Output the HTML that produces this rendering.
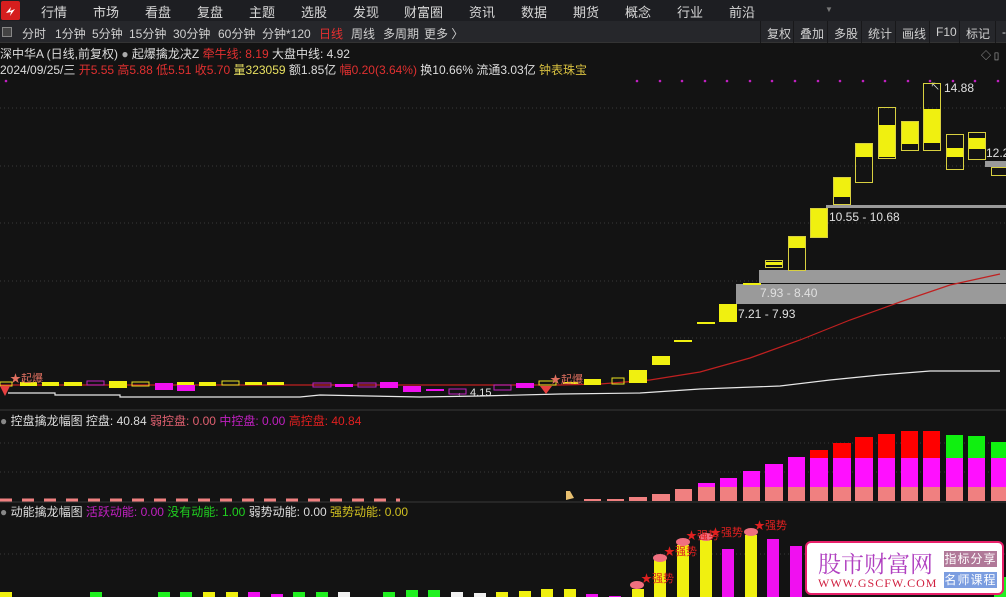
<!DOCTYPE html>
<html><head><meta charset="utf-8"><style>
*{margin:0;padding:0;box-sizing:border-box}
body{width:1006px;height:597px;background:#131313;overflow:hidden;font-family:"Liberation Sans","Noto Sans CJK SC",sans-serif;position:relative;color:#ddd}
.nav{position:absolute;left:0;top:0;width:1006px;height:21px;background:#1d1e22}
.nav span{position:absolute;top:2px;font-size:13px;color:#d8d8d8}
.tb{position:absolute;left:0;top:21px;width:1006px;height:22px;background:#26272b;border-bottom:1px solid #333}
.tb span{position:absolute;top:4px;font-size:12px;color:#d0d0d0}
.rb{position:absolute;top:21px;height:22px;font-size:12px;color:#d0d0d0;padding:4px 0 0 6px;border-left:1px solid #18181a}
.t{position:absolute;font-size:12px;white-space:nowrap}
</style></head><body>
<div class="nav">
<div style="position:absolute;left:1px;top:1px;width:19px;height:19px;background:#d51e1e;border-radius:2px"><svg width="19" height="19"><path d="M5 12 L10 6 L9 10 L14 8 L9 15 L10 11 Z" fill="#fff"/></svg></div>
<span style="left:41px">行情</span><span style="left:93px">市场</span><span style="left:145px">看盘</span><span style="left:197px">复盘</span><span style="left:249px">主题</span><span style="left:301px">选股</span><span style="left:353px">发现</span><span style="left:404px">财富圈</span><span style="left:469px">资讯</span><span style="left:521px">数据</span><span style="left:573px">期货</span><span style="left:625px">概念</span><span style="left:677px">行业</span><span style="left:729px">前沿</span>
<span style="left:825px;top:5px;font-size:8px;color:#777">▼</span>
</div>
<div class="tb">
<div style="position:absolute;left:2px;top:6px;width:10px;height:10px;border:1px solid #888;background:#444"></div>
<span style="left:22px">分时</span><span style="left:55px">1分钟</span><span style="left:92px">5分钟</span><span style="left:129px">15分钟</span><span style="left:173px">30分钟</span><span style="left:218px">60分钟</span><span style="left:262px">分钟*120</span><span style="left:319px;color:#e83030">日线</span><span style="left:351px">周线</span><span style="left:383px">多周期</span><span style="left:424px">更多 〉</span>
</div>
<div class="rb" style="left:760px;width:33px">复权</div><div class="rb" style="left:793px;width:34px">叠加</div><div class="rb" style="left:827px;width:34px">多股</div><div class="rb" style="left:861px;width:34px">统计</div><div class="rb" style="left:895px;width:34px">画线</div><div class="rb" style="left:929px;width:30px">F10</div><div class="rb" style="left:959px;width:36px">标记</div><div class="rb" style="left:995px;width:11px">-</div>
<div class="t" style="left:0;top:45px;color:#ddd">深中华A (日线,前复权) <span style="color:#aaa">●</span> 起爆擒龙决Z <span style="color:#e03030">牵牛线: 8.19</span> 大盘中线: 4.92</div>
<div class="t" style="left:0;top:61px;color:#ddd">2024/09/25/三 <span style="color:#e03030">开5.55 高5.88 低5.51 收5.70</span> <span style="color:#e8e060">量323059</span> 额1.85亿 <span style="color:#e03030">幅0.20(3.64%)</span> 换10.66% 流通3.03亿 <span style="color:#d8c040">钟表珠宝</span></div>
<div class="t" style="left:981px;top:47px;color:#aaa;font-size:10px">◇ ▯</div>

<svg width="1006" height="597" style="position:absolute;left:0;top:0">
<g stroke="#3a3a3a" stroke-dasharray="1,3"><line x1="0" y1="108" x2="1006" y2="108"/><line x1="0" y1="166" x2="1006" y2="166"/><line x1="0" y1="223" x2="1006" y2="223"/><line x1="0" y1="281" x2="1006" y2="281"/><line x1="0" y1="338" x2="1006" y2="338"/>
<line x1="0" y1="443" x2="1006" y2="443"/><line x1="0" y1="472" x2="1006" y2="472"/><line x1="0" y1="554" x2="1006" y2="554"/></g>
<g fill="#c020c0"><circle cx="6" cy="81" r="1.3"/><circle cx="637" cy="81" r="1.3"/><circle cx="660" cy="81" r="1.3"/><circle cx="682" cy="81" r="1.3"/><circle cx="705" cy="81" r="1.3"/><circle cx="727" cy="81" r="1.3"/><circle cx="750" cy="81" r="1.3"/><circle cx="772" cy="81" r="1.3"/><circle cx="795" cy="81" r="1.3"/><circle cx="818" cy="81" r="1.3"/><circle cx="840" cy="81" r="1.3"/><circle cx="863" cy="81" r="1.3"/><circle cx="885" cy="81" r="1.3"/><circle cx="908" cy="81" r="1.3"/><circle cx="930" cy="81" r="1.3"/><circle cx="953" cy="81" r="1.3"/><circle cx="975" cy="81" r="1.3"/><circle cx="998" cy="81" r="1.3"/></g>
<!-- gray bands -->
<rect x="759" y="270" width="247" height="13" fill="#9a9a9a"/><rect x="736" y="284" width="270" height="20" fill="#9a9a9a"/>
<rect x="826" y="205" width="180" height="3" fill="#9a9a9a"/><rect x="985" y="161" width="21" height="6" fill="#9a9a9a"/>
<text x="760" y="297" fill="#e0e0e0" font-size="12" font-family="Liberation Sans">7.93 - 8.40</text>
<text x="738" y="318" fill="#e0e0e0" font-size="12" font-family="Liberation Sans">7.21 - 7.93</text>
<text x="829" y="221" fill="#e0e0e0" font-size="12" font-family="Liberation Sans">10.55 - 10.68</text>
<text x="944" y="92" fill="#e0e0e0" font-size="12" font-family="Liberation Sans">14.88</text>
<text x="930" y="90" fill="#e0e0e0" font-size="10">↖</text>
<text x="986" y="157" fill="#e0e0e0" font-size="12" font-family="Liberation Sans">12.2</text>
<text x="456" y="396" fill="#e0e0e0" font-size="11" font-family="Liberation Sans">← 4.15</text>
<!-- lines -->
<path d="M0 385 L560 385 L600 384 L650 380 L700 372 L750 358 L800 340 L850 320 L900 302 L950 285 L1000 274" stroke="#c02020" stroke-width="1.2" fill="none"/>
<path d="M8 393 L55 393 L55 395 L120 395 L120 397 L300 397 L320 395 L420 397 L480 396 L560 394 L640 393 L700 389 L780 386 L830 380 L880 375 L930 371 L1000 371" stroke="#e8e8e8" stroke-width="1.2" fill="none"/>
<!-- left candles -->
<g stroke="#e8e020" fill="none"><rect x="0" y="382" width="12" height="4"/><rect x="132" y="382" width="17" height="4"/><rect x="222" y="381" width="17" height="4"/><rect x="539" y="381" width="17" height="4"/><rect x="612" y="378" width="12" height="6"/></g>
<g fill="#f0f010"><rect x="20" y="382" width="17" height="4"/><rect x="42" y="382" width="17" height="4"/><rect x="64" y="382" width="18" height="4"/><rect x="109" y="381" width="18" height="7"/><rect x="177" y="382" width="17" height="4"/><rect x="199" y="382" width="17" height="4"/><rect x="245" y="382" width="17" height="3"/><rect x="267" y="382" width="17" height="3"/><rect x="563" y="382" width="15" height="2"/><rect x="584" y="379" width="17" height="6"/>
<rect x="629" y="370" width="18" height="13"/><rect x="652" y="356" width="18" height="9"/><rect x="674" y="340" width="18" height="2"/><rect x="697" y="322" width="18" height="2"/><rect x="719" y="304" width="18" height="18"/><rect x="743" y="283" width="18" height="2"/><rect x="765" y="262" width="18" height="3"/><rect x="788" y="236" width="18" height="12"/><rect x="810" y="208" width="18" height="29"/><rect x="833" y="177" width="18" height="20"/><rect x="855" y="143" width="18" height="14"/><rect x="878" y="125" width="18" height="32"/><rect x="901" y="121" width="18" height="23"/><rect x="923" y="109" width="18" height="34"/><rect x="946" y="148" width="18" height="9"/><rect x="968" y="138" width="18" height="11"/></g>
<g stroke="#d8d040" fill="none"><rect x="765.5" y="260.5" width="17" height="7"/><rect x="788.5" y="236.5" width="17" height="34"/><rect x="810.5" y="208.5" width="17" height="29"/><rect x="833.5" y="177.5" width="17" height="27"/><rect x="855.5" y="143.5" width="17" height="39"/><rect x="878.5" y="107.5" width="17" height="51"/><rect x="901.5" y="121.5" width="17" height="29"/><rect x="923.5" y="83.5" width="17" height="67"/><rect x="946.5" y="134.5" width="17" height="35"/><rect x="968.5" y="132.5" width="17" height="27"/><rect x="991.5" y="167.5" width="15" height="8"/></g>
<g stroke="#c020c0" fill="none"><rect x="87" y="381" width="17" height="4"/><rect x="313" y="383" width="18" height="4"/><rect x="358" y="383" width="18" height="4"/><rect x="449" y="389" width="17" height="5"/><rect x="494" y="385" width="17" height="5"/></g>
<g fill="#f010f0"><rect x="155" y="383" width="18" height="7"/><rect x="177" y="385" width="18" height="6"/><rect x="335" y="384" width="18" height="3"/><rect x="380" y="382" width="18" height="6"/><rect x="403" y="386" width="18" height="6"/><rect x="426" y="389" width="18" height="2"/><rect x="516" y="383" width="18" height="5"/></g>
<g fill="#e84040"><path d="M0 386 L10 386 L5 396Z"/><path d="M540 386 L552 386 L546 394Z"/></g>
<text x="10" y="382" fill="#e07060" font-size="11">★起爆</text><text x="550" y="383" fill="#e07060" font-size="11">★起爆</text>
<!-- panel 2 -->
<line x1="0" y1="410" x2="1006" y2="410" stroke="#3a3a3a"/>
<line x1="0" y1="502" x2="1006" y2="502" stroke="#3a3a3a"/>
<line x1="0" y1="500" x2="400" y2="500" stroke="#f08080" stroke-width="3" stroke-dasharray="12,10"/>
<g fill="#f08080"><rect x="584" y="499" width="17" height="2"/><rect x="607" y="499" width="17" height="2"/><rect x="629" y="497" width="18" height="4"/><rect x="652" y="494" width="18" height="7"/><rect x="675" y="489" width="17" height="12"/><rect x="698" y="487" width="17" height="14"/><rect x="720" y="487" width="17" height="14"/><rect x="743" y="487" width="17" height="14"/><rect x="765" y="487" width="18" height="14"/><rect x="788" y="487" width="17" height="14"/><rect x="810" y="487" width="18" height="14"/><rect x="833" y="487" width="18" height="14"/><rect x="855" y="487" width="18" height="14"/><rect x="878" y="487" width="17" height="14"/><rect x="901" y="487" width="17" height="14"/><rect x="923" y="487" width="17" height="14"/><rect x="946" y="487" width="17" height="14"/><rect x="968" y="487" width="17" height="14"/><rect x="991" y="487" width="15" height="14"/></g>
<g fill="#ff10ff"><rect x="698" y="483" width="17" height="4"/><rect x="720" y="478" width="17" height="9"/><rect x="743" y="471" width="17" height="16"/><rect x="765" y="464" width="18" height="23"/><rect x="788" y="457" width="17" height="30"/><rect x="810" y="458" width="18" height="29"/><rect x="833" y="458" width="18" height="29"/><rect x="855" y="458" width="18" height="29"/><rect x="878" y="458" width="17" height="29"/><rect x="901" y="458" width="17" height="29"/><rect x="923" y="458" width="17" height="29"/><rect x="946" y="458" width="17" height="29"/><rect x="968" y="458" width="17" height="29"/><rect x="991" y="458" width="15" height="29"/></g>
<g fill="#ff0000"><rect x="810" y="450" width="18" height="8"/><rect x="833" y="443" width="18" height="15"/><rect x="855" y="437" width="18" height="21"/><rect x="878" y="434" width="17" height="24"/><rect x="901" y="431" width="17" height="27"/><rect x="923" y="431" width="17" height="27"/></g>
<g fill="#10f010"><rect x="946" y="435" width="17" height="23"/><rect x="968" y="436" width="17" height="22"/><rect x="991" y="442" width="15" height="16"/></g>
<path d="M566 491 L570 491 L574 498 L566 500Z" fill="#e8c070"/>
<!-- panel 3 bars -->
<g fill="#f0f010"><rect x="0" y="592" width="12" height="5"/><rect x="203" y="592" width="12" height="5"/><rect x="226" y="592" width="12" height="5"/><rect x="496" y="592" width="12" height="5"/><rect x="519" y="591" width="12" height="6"/><rect x="541" y="589" width="12" height="8"/><rect x="564" y="589" width="12" height="8"/><rect x="632" y="589" width="12" height="8"/><rect x="654" y="557" width="12" height="40"/><rect x="677" y="545" width="12" height="52"/><rect x="700" y="540" width="12" height="57"/><rect x="745" y="535" width="12" height="62"/></g>
<g fill="#20f020"><rect x="90" y="592" width="12" height="5"/><rect x="158" y="592" width="12" height="5"/><rect x="180" y="592" width="12" height="5"/><rect x="293" y="592" width="12" height="5"/><rect x="316" y="592" width="12" height="5"/><rect x="383" y="592" width="12" height="5"/><rect x="406" y="590" width="12" height="7"/><rect x="428" y="590" width="12" height="7"/><rect x="994" y="577" width="12" height="20"/></g>
<g fill="#f010f0"><rect x="248" y="592" width="12" height="5"/><rect x="271" y="594" width="12" height="3"/><rect x="586" y="594" width="12" height="3"/><rect x="609" y="596" width="12" height="1"/><rect x="722" y="549" width="12" height="48"/><rect x="767" y="539" width="12" height="58"/><rect x="790" y="546" width="12" height="51"/></g>
<g fill="#f0f0f0"><rect x="338" y="592" width="12" height="5"/><rect x="451" y="592" width="12" height="5"/><rect x="474" y="593" width="12" height="4"/></g>
<g fill="#f07080"><ellipse cx="637" cy="585" rx="7" ry="4"/><ellipse cx="660" cy="558" rx="7" ry="4"/><ellipse cx="683" cy="542" rx="7" ry="4"/><ellipse cx="706" cy="537" rx="7" ry="4"/><ellipse cx="751" cy="532" rx="7" ry="4"/></g>
<g fill="#e02020" font-size="11"><text x="641" y="582">★强势</text><text x="664" y="555">★强势</text><text x="686" y="539">★强势</text><text x="710" y="536">★强势</text><text x="754" y="529">★强势</text></g>
</svg>
<div class="t" style="left:0;top:412px;color:#ddd"><span style="color:#888">●</span> 控盘擒龙幅图 控盘: 40.84 <span style="color:#e06070">弱控盘: 0.00</span> <span style="color:#c020c0">中控盘: 0.00</span> <span style="color:#e02020">高控盘: 40.84</span></div>
<div class="t" style="left:0;top:503px;color:#ddd"><span style="color:#888">●</span> 动能擒龙幅图 <span style="color:#c020c0">活跃动能: 0.00</span> <span style="color:#20d020">没有动能: 1.00</span> 弱势动能: 0.00 <span style="color:#d0c020">强势动能: 0.00</span></div>
<div style="position:absolute;left:805px;top:541px;width:199px;height:54px;background:#fff;border:2px solid #e8206a;border-radius:6px">
<div style="position:absolute;left:11px;top:3px;font-size:23px;color:#b040c0;font-family:'Noto Serif CJK SC',serif;letter-spacing:0px">股市财富网</div>
<div style="position:absolute;left:11px;top:33px;font-size:12px;color:#d02040;font-family:'Liberation Serif',serif;letter-spacing:1px">WWW.GSCFW.COM</div>
<div style="position:absolute;left:137px;top:8px;width:53px;height:16px;background:#b07898;color:#fff;font-size:12px;text-align:center;line-height:16px;letter-spacing:1px">指标分享</div>
<div style="position:absolute;left:137px;top:29px;width:53px;height:16px;background:#7b9de0;color:#fff;font-size:12px;text-align:center;line-height:16px;letter-spacing:1px">名师课程</div>
</div>
</body></html>
